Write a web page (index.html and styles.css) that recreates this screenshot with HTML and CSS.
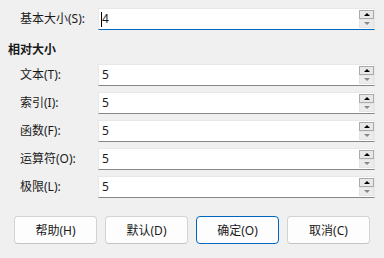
FILE: index.html
```html
<!DOCTYPE html>
<html>
<head>
<meta charset="utf-8">
<link rel="stylesheet" href="styles.css">
</head>
<body>
<div class="dialog">
  <div class="row">
    <label class="label">基本大小(S):</label>
    <div class="field focused">
      <div class="value"><span class="caret"></span>4</div>
      <div class="spin"><span class="up"><i></i></span><span class="down"><i></i></span></div>
    </div>
  </div>
  <div class="heading">相对大小</div>
  <div class="row">
    <label class="label">文本(T):</label>
    <div class="field">
      <div class="value">5</div>
      <div class="spin"><span class="up"><i></i></span><span class="down"><i></i></span></div>
    </div>
  </div>
  <div class="row">
    <label class="label">索引(I):</label>
    <div class="field">
      <div class="value">5</div>
      <div class="spin"><span class="up"><i></i></span><span class="down"><i></i></span></div>
    </div>
  </div>
  <div class="row">
    <label class="label">函数(F):</label>
    <div class="field">
      <div class="value">5</div>
      <div class="spin"><span class="up"><i></i></span><span class="down"><i></i></span></div>
    </div>
  </div>
  <div class="row">
    <label class="label">运算符(O):</label>
    <div class="field">
      <div class="value">5</div>
      <div class="spin"><span class="up"><i></i></span><span class="down"><i></i></span></div>
    </div>
  </div>
  <div class="row">
    <label class="label">极限(L):</label>
    <div class="field">
      <div class="value">5</div>
      <div class="spin"><span class="up"><i></i></span><span class="down"><i></i></span></div>
    </div>
  </div>
  <div class="buttons">
    <button class="btn">帮助(H)</button>
    <button class="btn">默认(D)</button>
    <button class="btn primary">确定(O)</button>
    <button class="btn">取消(C)</button>
  </div>
</div>
</body>
</html>
```

FILE: styles.css
```css
html, body {
  margin: 0;
  padding: 0;
  background: #f0f0f0;
}
body {
  font-family: "Noto Sans", "Noto Sans CJK SC", sans-serif;
  font-size: 12px;
  color: #1a1a1a;
  width: 384px;
  height: 258px;
  overflow: hidden;
}
.dialog {
  padding: 8px 9px 0 8px;
}
.row {
  display: flex;
  align-items: center;
  height: 22px;
  margin-bottom: 6px;
}
.label {
  flex: none;
  width: 90px;
  padding-left: 12px;
  box-sizing: border-box;
  line-height: 16px;
  white-space: nowrap;
}
.heading {
  font-weight: bold;
  line-height: 16px;
  margin-top: 12px;
  margin-bottom: 6px;
  font-size: 12px;
}
.field {
  flex: none;
  width: 277px;
  height: 22px;
  box-sizing: border-box;
  background: #ffffff;
  border: 1px solid #e8e8e8;
  border-bottom: 1px solid #868686;
  display: flex;
  align-items: flex-start;
}
.field.focused {
  border-bottom-color: #0067c0;
}
.value {
  flex: 1;
  height: 20px;
  line-height: 20px;
  padding-left: 3px;
  display: flex;
  align-items: center;
}
.caret {
  display: inline-block;
  width: 1px;
  height: 15px;
  background: #000;
  margin-left: -1px;
}
.spin {
  width: 15px;
  margin-top: 1px;
  display: flex;
  flex-direction: column;
}
.spin span {
  height: 9px;
  box-sizing: border-box;
  display: flex;
  align-items: center;
  justify-content: center;
}
.spin .up {
  border: 1px solid #ababab;
  background: #e8e8e8;
}
.spin .down {
  border: 1px solid #e4e4e4;
  background: #ececec;
}
.spin i {
  display: block;
  width: 0;
  height: 0;
  border-left: 3px solid transparent;
  border-right: 3px solid transparent;
}
.spin .up i {
  border-bottom: 3px solid #000;
}
.spin .down i {
  border-top: 3px solid #888;
}
.buttons {
  display: flex;
  gap: 8px;
  padding-left: 6px;
  margin-top: 18px;
}
.btn {
  width: 83px;
  height: 28px;
  box-sizing: border-box;
  background: #fdfdfd;
  border: 1px solid #d3d3d3;
  border-bottom-color: #c4c4c4;
  border-radius: 4px;
  font-family: "Noto Sans", "Noto Sans CJK SC", sans-serif;
  font-size: 12px;
  color: #1a1a1a;
  padding: 0;
}
.btn.primary {
  border: 1px solid #0067c0;
}
```
